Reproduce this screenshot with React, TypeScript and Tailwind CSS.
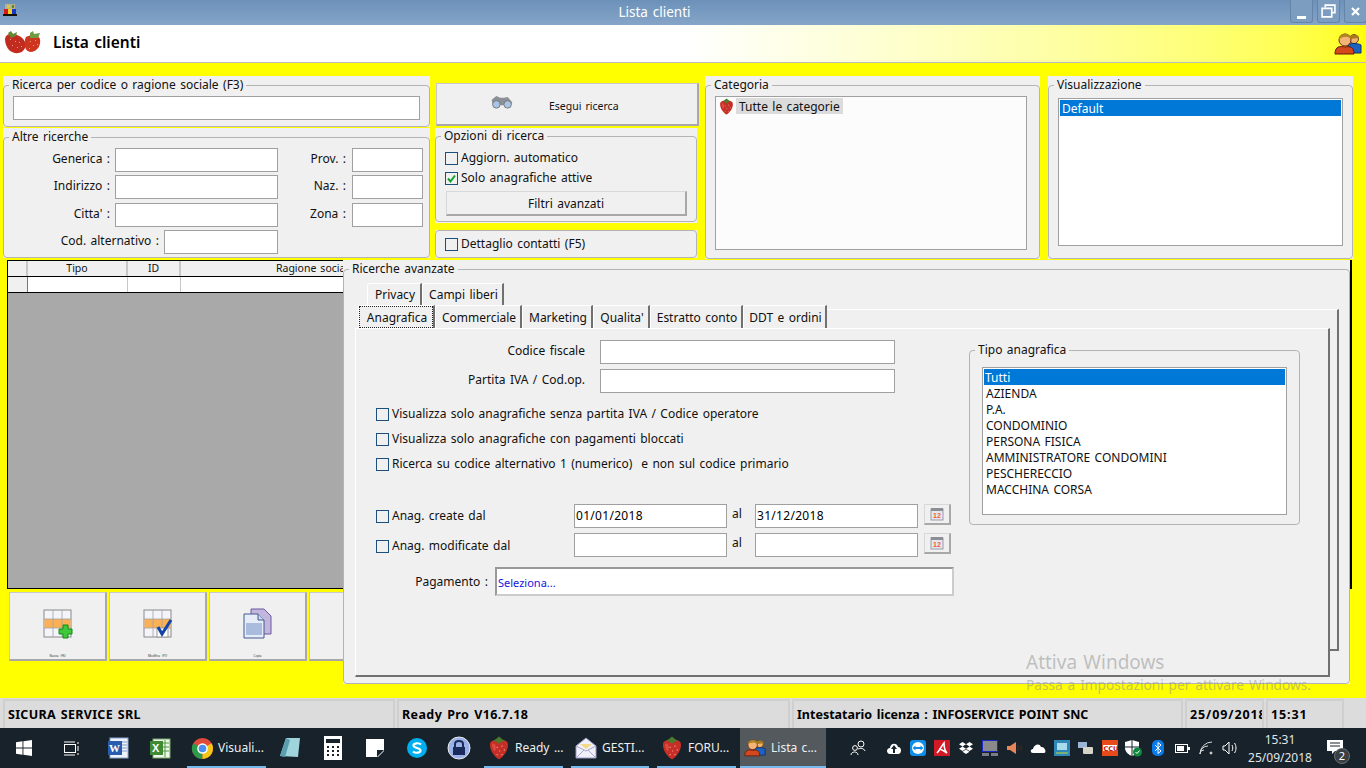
import React from "react";

const font = "font-['Noto_Sans','Liberation_Sans',sans-serif]";

function Strawberry({ s = 18 }: { s?: number }) {
  return (
    <svg width={s} height={s} viewBox="0 0 20 20" className="shrink-0">
      <path d="M2.5 7 C2.5 3.5 7 3 10 3.5 C13 3 17.5 3.5 17.5 7 C18 12 13 18 10 19.5 C7 18 2 12 2.5 7Z" fill="#c62f27" />
      <path d="M4.5 6.5C7 5 8 9 6.5 13C5 11 4 9 4.5 6.5Z" fill="#dd4c3f" />
      <path d="M5 4 L7.5 2.5 L10 0.5 L12.5 2.5 L15 4 L12.5 4.5 L10 6.5 L7.5 4.5Z" fill="#4d7a2d" />
      <path d="M8 9h1v1H8zM12 8h1v1h-1zM14 11h1v1h-1zM10 12h1v1h-1zM8 15h1v1H8zM12 15h1v1h-1z" fill="#e89a80" />
    </svg>
  );
}

function Input({ className = "", value = "" }: { className?: string; value?: string }) {
  return (
    <div className={`h-[24px] bg-white border border-[#a0a0a0] pl-[1px] text-[12px] leading-[22px] tracking-[0.3px] text-black ${className}`}>{value}</div>
  );
}

function Check({ checked = false }: { checked?: boolean }) {
  return (
    <span className="w-[13px] h-[13px] border border-[#1c4f7c] bg-[#f0f0f0] shrink-0 flex items-center justify-center">
      {checked && (
        <svg width="11" height="11" viewBox="0 0 11 11"><path d="M2 5.5 L4.5 8.5 L9 2.5" stroke="#12a02c" strokeWidth="2" fill="none" /></svg>
      )}
    </span>
  );
}

function Group({ title, className = "", children }: { title?: string; className?: string; children: React.ReactNode }) {
  return (
    <fieldset className={`border border-[#b4b4b4] rounded-[4px] min-w-0 ${className}`}>
      {title && <legend className="ml-[5px] px-[3px] text-[12px] leading-[16px] text-[#111]">{title}</legend>}
      {children}
    </fieldset>
  );
}

function Label({ w, children }: { w: string; children: React.ReactNode }) {
  return <span className={`${w} text-right text-[12px] text-[#111] shrink-0 pb-[2px]`}>{children}</span>;
}

function Tab({ w, low, label, active }: { w: string; low?: boolean; label: string; active?: boolean }) {
  return (
    <div className={`${w} ${low ? "h-[23px]" : "h-[22px]"} shrink-0 text-[12px] text-[#111] border-t border-l border-white border-r-2 border-r-[#707070] rounded-tl-[3px] bg-[#f0f0f0]`}>
      <span className={`w-full h-full flex items-center justify-center pl-[2px] ${low ? "pt-[2px]" : ""} ${active ? "outline-1 outline-dotted outline-[#222] -outline-offset-1" : ""}`}>{label}</span>
    </div>
  );
}

function TableIcon({ kind }: { kind: "plus" | "check" }) {
  return (
    <svg width="30" height="30" viewBox="0 0 30 30">
      <rect x="1" y="1" width="27" height="27" fill="#f4f4fb" stroke="#8a8a8a" />
      <rect x="1.5" y="10" width="26" height="9" fill="#fbb055" />
      <path d="M10 1V28M19 1V28M1 10H28M1 19H28" stroke="#a3a3a3" strokeWidth="0.8" />
      {kind === "plus" ? (
        <path d="M20 16h5v4h4v5h-4v4h-5v-4h-4v-5h4z" fill="#3ec83a" stroke="#0e8c12" />
      ) : (
        <>
          <rect x="14" y="19" width="11" height="9" fill="#fff" stroke="#999" />
          <path d="M15 18 L19 25 L28 11" stroke="#1144a6" strokeWidth="3" fill="none" />
        </>
      )}
    </svg>
  );
}

function DocsIcon() {
  return (
    <svg width="30" height="32" viewBox="0 0 30 32">
      <path d="M8 1H21L28 8V26H8Z" fill="#c3b6de" stroke="#6b5aa0" />
      <path d="M1 6H15L21 12V30H1Z" fill="#e6ecf8" stroke="#42598e" />
      <rect x="3" y="15" width="16" height="12" fill="#a9bcdd" />
      <path d="M15 6V12H21" fill="#c9daf0" stroke="#42598e" />
    </svg>
  );
}

function ToolButton({ children, caption }: { children?: React.ReactNode; caption?: string }) {
  return (
    <div className="w-[98px] h-[69px] shrink-0 bg-[#f0f0f0] border border-[#c8c8c8] border-r-2 border-b-2 border-r-[#a8a8a8] border-b-[#a8a8a8] flex flex-col items-center">
      <div className="h-[60px] flex items-center justify-center pt-[2px]">{children}</div>
      {caption && <div className="text-[3px] leading-[4px] mt-[1px] text-[#333]">{caption}</div>}
    </div>
  );
}

function Calendar() {
  return (
    <div className="w-[27px] h-[21px] ml-[6px] mb-[3px] bg-[#f0f0f0] border border-[#d8d8d8] border-r-2 border-b-2 border-r-[#a8a8a8] border-b-[#a8a8a8] flex items-center justify-center">
      <svg width="14" height="14" viewBox="0 0 14 14">
        <rect x="1" y="2" width="12" height="11" fill="#e6e6f0" stroke="#9a9aa8" />
        <rect x="1" y="1" width="12" height="3" fill="#8d8d94" />
        <text x="3" y="11" fontSize="7" fontWeight="700" fill="#f0602a" fontFamily="Liberation Sans">12</text>
      </svg>
    </div>
  );
}

function People({ s = 28 }: { s?: number }) {
  return (
    <svg width={s} height={s} viewBox="0 0 28 24">
      <circle cx="20" cy="7" r="4.5" fill="#f2b271" stroke="#6a4a10" />
      <path d="M14 13 C15 11 24 11 27 13 L27 21 L14 21Z" fill="#1e62c0" stroke="#0d2f70" />
      <path d="M15 7 C15 2 25 1 25 6" fill="#a8781e" />
      <circle cx="11" cy="8" r="6" fill="#f4b478" stroke="#6a2a10" />
      <path d="M5 8 C4 0 18 0 17 7 C14 4 8 4 5 8Z" fill="#b08420" />
      <path d="M1 22 C1 14 6 14 11 15 C16 14 20 15 20 22Z" fill="#d5471c" stroke="#661a08" />
    </svg>
  );
}

function TaskApp({ w, icon, label, active }: { w: string; icon: React.ReactNode; label: string; active?: boolean }) {
  return (
    <div className={`${w} h-full shrink-0 relative flex items-center pl-[3px] gap-[4px] text-[12px] text-white ${active ? "bg-[#53595d]" : ""}`}>
      <span className="w-[24px] flex justify-center shrink-0">{icon}</span>
      <span className="whitespace-nowrap text-[#eef0f2]">{label}</span>
      <span className="absolute left-0 right-0 bottom-0 h-[2px] bg-[#76b9ed]" />
    </div>
  );
}

function Word() {
  return (
    <svg width="24" height="24" viewBox="0 0 24 24">
      <rect x="4" y="2" width="18" height="20" fill="#eef2fa" stroke="#8ba4cf" />
      <path d="M14 6H21M14 9H21M14 12H21M14 15H21" stroke="#7e9ccc" />
      <rect x="2" y="5" width="14" height="14" fill="#2a5cae" />
      <text x="3" y="16" fontSize="11" fontWeight="700" fill="#fff" fontFamily="Liberation Serif">W</text>
    </svg>
  );
}
function Excel() {
  return (
    <svg width="24" height="24" viewBox="0 0 24 24">
      <rect x="5" y="3" width="17" height="19" fill="#eef6ea" stroke="#79a868" />
      <path d="M13 7H21M13 11H21M13 15H21M17 4V21" stroke="#4c9a3c" />
      <rect x="2" y="5" width="13" height="14" fill="#3f8a34" />
      <text x="4" y="16" fontSize="11" fontWeight="700" fill="#fff" fontFamily="Liberation Sans">X</text>
    </svg>
  );
}
function Chrome() {
  return (
    <svg width="23" height="23" viewBox="0 0 24 24">
      <circle cx="12" cy="12" r="11" fill="#e04a3a" />
      <path d="M12 12L2.4 6.5A11 11 0 0 0 12 23Z" fill="#2b9a4a" />
      <path d="M12 12L12 23A11 11 0 0 0 21.5 6.5Z" fill="#f5c518" />
      <circle cx="12" cy="12" r="5.5" fill="#fff" />
      <circle cx="12" cy="12" r="4" fill="#4a8ef0" />
    </svg>
  );
}
function Mail() {
  return (
    <svg width="24" height="24" viewBox="0 0 24 24">
      <path d="M2 10L12 2L22 10V22H2Z" fill="#f0f0f8" stroke="#9a9ac8" />
      <path d="M2 10L12 15L22 10M2 22L10 14M22 22L14 14" stroke="#a8a8cc" fill="none" />
      <path d="M6 8H18L12 13Z" fill="#f5d98a" />
    </svg>
  );
}

function TrayIcon({ children }: { children: React.ReactNode }) {
  return <span className="w-[24px] h-full flex items-center justify-center shrink-0">{children}</span>;
}

export default function App() {
  return (
    <div className={`w-[1366px] h-[768px] overflow-hidden flex flex-col relative [word-spacing:1.3px] ${font}`}>
      {/* title bar */}
      <div className="h-[25px] shrink-0 flex items-start bg-gradient-to-b from-[#6c91b9] to-[#85a5c8] relative">
        <svg width="14" height="12" viewBox="0 0 14 12" className="ml-[3px] mt-[4px] shrink-0">
          <rect x="2" y="0" width="10" height="5" fill="#b8b090" />
          <rect x="4" y="1" width="3" height="3" fill="#d8c83a" />
          <rect x="9" y="1" width="2" height="3" fill="#4c8a3a" />
          <rect x="1" y="5" width="4" height="5" fill="#d81818" />
          <rect x="5" y="5" width="4" height="5" fill="#f0d020" />
          <rect x="9" y="5" width="4" height="5" fill="#1838c8" />
          <rect x="0" y="10" width="14" height="2" fill="#181008" />
        </svg>
        <div className="flex-1 pl-[2px] text-center text-[13.5px] leading-[24px] text-white">Lista clienti</div>
        <div className="flex gap-[4px] -mr-[1px] items-start">
          <div className="w-[23px] h-[23px] rounded-b-[3px] bg-[#7c9dc0] border border-t-0 border-[#6585a8] flex items-end justify-center pb-[3px]"><span className="w-[9px] h-[3px] bg-white" /></div>
          <div className="w-[23px] h-[23px] rounded-b-[3px] bg-[#7c9dc0] border border-t-0 border-[#6585a8] flex items-center justify-center">
            <svg width="15" height="14" viewBox="0 0 14 13"><path d="M4 3V1H13V8H10M1 4H10V12H1Z" fill="none" stroke="#fff" strokeWidth="1.5" /></svg>
          </div>
          <div className="w-[23px] h-[23px] rounded-b-[3px] bg-[#7c9dc0] border border-t-0 border-[#6585a8] flex items-center justify-center">
            <svg width="9" height="9" viewBox="0 0 9 9"><path d="M1 1L8 8M8 1L1 8" stroke="#fff" strokeWidth="2.2" /></svg>
          </div>
        </div>
      </div>

      {/* header */}
      <div className="h-[38px] shrink-0 flex items-center bg-gradient-to-r from-white via-white via-50% to-[#ffff00] border-b border-[#bcbcbc]">
        <svg width="38" height="26" viewBox="0 0 38 26" className="ml-[4px] mt-[-2px]">
          <path d="M1 9C2 3 8 3 13 5C19 7 23 12 21 18C18 25 9 24 5 20C2 16 1 13 1 9Z" fill="#c22c20" />
          <path d="M22 7C27 4 35 5 36 9C37 15 34 21 27 22C23 22 20 18 21 13C21 10 21 8 22 7Z" fill="#cd351f" />
          <path d="M4 3L7 1L9 4L13 2L12 6L7 8Z" fill="#5f8a33" />
          <path d="M26 3L29 1L30 4L36 3L34 8L26 8Z" fill="#6f9a3f" />
          <path d="M6 9h1v1H6zM11 11h1v1h-1zM15 12h1v1h-1zM8 15h1v1H8zM13 17h1v1h-1zM17 16h1v1h-1zM26 11h1v1h-1zM31 10h1v1h-1zM29 15h1v1h-1zM33 14h1v1h-1zM25 18h1v1h-1z" fill="#f09a80" />
        </svg>
        <span className="ml-[11px] text-[15.5px] leading-[20px] font-semibold text-black pb-[4px]">Lista clienti</span>
        <span className="ml-auto mr-[4px] flex"><People s={28} /></span>
      </div>

      {/* workspace */}
      <div className="flex-1 bg-[#ffff00] relative flex flex-col pt-[13px] min-h-0">
        <div className="flex items-start h-[184px] shrink-0">
          {/* left */}
          <div className="w-[427px] ml-[3px] shrink-0 flex flex-col gap-[1px]">
            <div className="bg-[#f0f0f0] h-[51px] pt-[1px]">
              <Group title="Ricerca per codice o ragione sociale (F3)" className="h-[50px]">
                <div className="px-[9px] pt-[3px]"><Input className="w-[407px]" /></div>
              </Group>
            </div>
            <div className="bg-[#f0f0f0] h-[130px] pt-[1px]">
              <Group title="Altre ricerche" className="h-[129px]">
                <div className="flex flex-col pt-[3px]">
                  <div className="flex items-center">
                    <Label w="w-[106px]">Generica :</Label>
                    <Input className="w-[163px] ml-[5px]" />
                    <Label w="w-[68px]">Prov. :</Label>
                    <Input className="w-[71px] ml-[6px]" />
                  </div>
                  <div className="flex items-center mt-[3px]">
                    <Label w="w-[106px]">Indirizzo :</Label>
                    <Input className="w-[163px] ml-[5px]" />
                    <Label w="w-[68px]">Naz. :</Label>
                    <Input className="w-[71px] ml-[6px]" />
                  </div>
                  <div className="flex items-center mt-[4px]">
                    <Label w="w-[106px]">Citta' :</Label>
                    <Input className="w-[163px] ml-[5px]" />
                    <Label w="w-[68px]">Zona :</Label>
                    <Input className="w-[71px] ml-[6px]" />
                  </div>
                  <div className="flex items-center mt-[3px]">
                    <Label w="w-[155px]">Cod. alternativo :</Label>
                    <Input className="w-[114px] ml-[5px]" />
                  </div>
                </div>
              </Group>
            </div>
          </div>

          {/* middle */}
          <div className="w-[264px] ml-[5px] mt-[7px] shrink-0 flex flex-col">
            <div className="ml-[1px] w-[263px] h-[43px] bg-[#f0f0f0] border border-[#c8c8c8] border-r-2 border-b-2 border-r-[#a8a8a8] border-b-[#a8a8a8] flex items-center">
              <svg width="24" height="15" viewBox="0 0 24 16" className="ml-[53px] mb-[3px]">
                <path d="M1 5L6 1L10 3L14 3L18 2L23 8L19 14L14 11L10 11L7 14L2 10Z" fill="#8b8f96" />
                <circle cx="6" cy="10" r="4" fill="#a8c4e8" stroke="#777" />
                <circle cx="18" cy="10" r="4" fill="#a8c4e8" stroke="#777" />
              </svg>
              <span className="ml-[35px] mt-[5px] text-[10.5px] text-[#111]">Esegui ricerca</span>
            </div>
            <div className="mt-[2px] w-[262px] h-[95px] bg-[#f0f0f0]">
              <Group title="Opzioni di ricerca" className="h-[94px]">
                <div className="px-[9px] pt-[4px]">
                  <div className="flex items-center gap-[3px] h-[20px]"><Check /><span className="text-[12px] text-[#111]">Aggiorn. automatico</span></div>
                  <div className="flex items-center gap-[3px] h-[20px]"><Check checked /><span className="text-[12px] text-[#111]">Solo anagrafiche attive</span></div>
                  <div className="mt-[3px] ml-[1px] w-[241px] h-[25px] border border-[#d8d8d8] border-r-2 border-b-2 border-r-[#a8a8a8] border-b-[#a8a8a8] text-center text-[12px] leading-[24px] text-[#111]">Filtri avanzati</div>
                </div>
              </Group>
            </div>
            <div className="mt-[7px] w-[262px] h-[28px] bg-[#f0f0f0]">
              <Group className="h-[28px]">
                <div className="px-[9px] flex items-center gap-[3px] h-[26px]"><Check /><span className="text-[12px] text-[#111]">Dettaglio contatti (F5)</span></div>
              </Group>
            </div>
          </div>

          {/* categoria */}
          <div className="w-[335px] ml-[6px] h-[183px] shrink-0 bg-[#f0f0f0] pt-[1px]">
            <Group title="Categoria" className="h-[182px]">
              <div className="px-[9px] pt-[3px]">
                <div className="w-[312px] h-[154px] bg-[#fcfcfc] border border-[#a0a0a0] flex items-start pl-[2px] pt-[1px]">
                  <Strawberry s={17} />
                  <span className="ml-[1px] bg-[#dcdcdc] px-[3px] h-[16px] text-[12px] leading-[18px] text-[#111]">Tutte le categorie</span>
                </div>
              </div>
            </Group>
          </div>

          {/* visualizzazione */}
          <div className="w-[305px] ml-[8px] h-[183px] shrink-0 bg-[#f0f0f0] pt-[1px]">
            <Group title="Visualizzazione" className="h-[182px]">
              <div className="px-[9px] pt-[5px]">
                <div className="w-[285px] h-[148px] bg-white border border-[#a0a0a0] p-[1px]">
                  <div className="h-[16px] bg-[#0078d7] text-white text-[12px] leading-[18px] pl-[2px]">Default</div>
                </div>
              </div>
            </Group>
          </div>
        </div>

        {/* grid */}
        <div className="ml-[7px] w-[1345px] h-[329px] shrink-0 border border-black border-r-2 bg-[#a9a9a9] flex flex-col">
          <div className="h-[16px] bg-[#f0f0f0] border-b border-black flex text-[10.5px] text-[#111] leading-[15px]">
            <div className="w-[20px] border-r-2 border-[#c8c8c8]" />
            <div className="w-[100px] border-r-2 border-[#c8c8c8] text-center">Tipo</div>
            <div className="w-[53px] border-r-2 border-[#c8c8c8] text-center">ID</div>
            <div className="w-[268px] text-center whitespace-nowrap">Ragione sociale</div>
          </div>
          <div className="h-[16px] bg-white border-b border-black flex">
            <div className="w-[20px] bg-[#f0f0f0] border-r border-[#777]" />
            <div className="w-[100px] border-r border-[#c8c8c8]" />
            <div className="w-[53px] border-r border-[#c8c8c8]" />
          </div>
        </div>

        {/* tool buttons */}
        <div className="ml-[9px] mt-[3px] flex gap-[2px] shrink-0">
          <ToolButton caption="Nuova (F6)"><TableIcon kind="plus" /></ToolButton>
          <ToolButton caption="Modifica (F7)"><TableIcon kind="check" /></ToolButton>
          <ToolButton caption="Copia"><DocsIcon /></ToolButton>
          <ToolButton />
        </div>

        {/* overlay panel */}
        <div className="absolute left-[343px] top-[197px] w-[1007px] h-[424px] bg-[#f0f0f0] pt-[1px]">
          <Group title="Ricerche avanzate" className="h-[423px] relative">
            <div className="pl-[23px] flex pt-[6px]">
              <Tab w="w-[55px]" label="Privacy" />
              <Tab w="w-[82px]" label="Campi liberi" />
            </div>
            {/* back pane */}
            <div className="ml-[13px] mt-[4px] w-[982px] h-[342px] border-t border-white border-r-2 border-b-2 border-r-[#707070] border-b-[#707070] flex flex-col">
              <div className="flex -mt-[5px] ml-[1px]">
                <Tab w="w-[77px]" low label="Anagrafica" active />
                <Tab w="w-[87px]" low label="Commerciale" />
                <Tab w="w-[71px]" low label="Marketing" />
                <Tab w="w-[57px]" low label="Qualita'" />
                <Tab w="w-[93px]" low label="Estratto conto" />
                <Tab w="w-[84px]" low label="DDT e ordini" />
              </div>
              <div className="ml-[-2px] w-[975px] h-[349px] bg-[#f0f0f0] border-t border-l border-white border-r-2 border-b-2 border-r-[#707070] border-b-[#707070] flex shrink-0 relative">
                <div className="w-[613px] shrink-0 pt-[11px]">
                  <div className="flex items-center h-[24px]">
                    <Label w="w-[229px]">Codice fiscale</Label>
                    <Input className="w-[295px] ml-[15px]" />
                  </div>
                  <div className="flex items-center h-[24px] mt-[5px]">
                    <Label w="w-[229px]">Partita IVA / Cod.op.</Label>
                    <Input className="w-[295px] ml-[15px]" />
                  </div>
                  <div className="pl-[20px] mt-[13px] flex flex-col gap-[9px]">
                    <div className="flex items-center gap-[3px] h-[16px]"><Check /><span className="text-[12px] text-[#111]">Visualizza solo anagrafiche senza partita IVA / Codice operatore</span></div>
                    <div className="flex items-center gap-[3px] h-[16px]"><Check /><span className="text-[12px] text-[#111]">Visualizza solo anagrafiche con pagamenti bloccati</span></div>
                    <div className="flex items-center gap-[3px] h-[16px]"><Check /><span className="text-[12px] text-[#111] whitespace-pre">Ricerca su codice alternativo 1 (numerico)  e non sul codice primario</span></div>
                  </div>
                  <div className="flex items-end h-[24px] mt-[32px]">
                    <div className="w-[218px] pl-[20px] h-[24px] flex items-center gap-[3px] shrink-0"><Check /><span className="text-[12px] text-[#111]">Anag. create dal</span></div>
                    <Input className="w-[153px]" value="01/01/2018" />
                    <span className="w-[28px] pl-[5px] h-[24px] leading-[20px] text-[12px] text-[#111] shrink-0">al</span>
                    <Input className="w-[163px]" value="31/12/2018" />
                    <Calendar />
                  </div>
                  <div className="flex items-end h-[24px] mt-[5px]">
                    <div className="w-[218px] pl-[20px] pt-[2px] h-[24px] flex items-center gap-[3px] shrink-0"><Check /><span className="text-[12px] text-[#111]">Anag. modificate dal</span></div>
                    <Input className="w-[153px]" />
                    <span className="w-[28px] pl-[5px] h-[24px] leading-[20px] text-[12px] text-[#111] shrink-0">al</span>
                    <Input className="w-[163px]" />
                    <Calendar />
                  </div>
                  <div className="flex items-center h-[29px] mt-[10px]">
                    <span className="w-[132px] text-right text-[12px] text-[#111] shrink-0">Pagamento :</span>
                    <div className="ml-[7px] w-[459px] h-[29px] bg-white border-2 border-[#999] border-r-[#ccc] border-b-[#ccc] text-[11px] leading-[27px] text-[#1414e0] pl-[1px]">Seleziona...</div>
                  </div>
                </div>
                <div className="pt-[13px]">
                  <Group title="Tipo anagrafica" className="w-[331px] h-[183px]">
                    <div className="pl-[12px] pt-[9px]">
                      <div className="w-[305px] h-[148px] bg-white border border-[#a0a0a0] p-[1px] text-[12px] leading-[16px] text-[#111]">
                        <div className="bg-[#0078d7] text-white pl-[1px] h-[16px] leading-[18px]">Tutti</div>
                        {["AZIENDA", "P.A.", "CONDOMINIO", "PERSONA FISICA", "AMMINISTRATORE CONDOMINI", "PESCHERECCIO", "MACCHINA CORSA"].map((t) => (
                          <div key={t} className="pl-[2px] h-[16px] leading-[18px]">{t}</div>
                        ))}
                      </div>
                    </div>
                  </Group>
                </div>
              </div>
            </div>
          </Group>
        </div>

        {/* watermark */}
        <div className="absolute left-[1026px] top-[586px] text-[#8c8c8c]/50 pointer-events-none">
          <div className="text-[19px] leading-[26px]">Attiva Windows</div>
          <div className="text-[13.7px] leading-[18px] mt-[1px] whitespace-nowrap">Passa a Impostazioni per attivare Windows.</div>
        </div>

        <div className="flex-1" />
      </div>

      {/* status bar */}
      <div className="h-[30px] shrink-0 bg-[#dcdcdc] flex pl-[3px] pt-[1px] gap-[2px] text-[12.5px] font-bold text-black">
        <div className="w-[392px] border-2 border-b-0 border-[#cfcfcf] pl-[3px] tracking-[0.3px] leading-[27px] overflow-hidden whitespace-nowrap">SICURA SERVICE SRL</div>
        <div className="w-[393px] border-2 border-b-0 border-[#cfcfcf] pl-[3px] tracking-[0.4px] leading-[27px] overflow-hidden whitespace-nowrap">Ready Pro V16.7.18</div>
        <div className="w-[391px] border-2 border-b-0 border-[#cfcfcf] pl-[3px] leading-[27px] overflow-hidden whitespace-nowrap">Intestatario licenza : INFOSERVICE POINT SNC</div>
        <div className="w-[79px] border-2 border-b-0 border-[#cfcfcf] pl-[3px] tracking-[0.9px] leading-[27px] overflow-hidden whitespace-nowrap">25/09/2018</div>
        <div className="w-[78px] border-2 border-b-0 border-[#cfcfcf] pl-[3px] tracking-[0.9px] leading-[27px] overflow-hidden whitespace-nowrap">15:31</div>
      </div>

      {/* taskbar */}
      <div className="h-[40px] shrink-0 bg-[#17222a] flex items-center text-white">
        <div className="w-[48px] h-full flex items-center justify-center shrink-0">
          <svg width="16" height="16" viewBox="0 0 16 16"><path d="M0 2.2L6.5 1.3V7.5H0ZM7.4 1.2L16 0V7.5H7.4ZM0 8.4H6.5V14.7L0 13.8ZM7.4 8.4H16V16L7.4 14.8Z" fill="#fff" /></svg>
        </div>
        <div className="w-[46px] ml-[1px] h-full flex items-center justify-center shrink-0">
          <svg width="16" height="15" viewBox="0 0 16 15" fill="none" stroke="#fff"><rect x="0.5" y="3.5" width="11" height="8" /><path d="M0 1H11M0 14H11M14 1V3M14 5V10M14 12V14" /></svg>
        </div>
        <div className="w-[42px] ml-[2px] flex justify-center shrink-0"><Word /></div>
        <div className="w-[42px] flex justify-center shrink-0"><Excel /></div>
        <div className="w-[6px]" />
        <TaskApp w="w-[79px]" icon={<Chrome />} label="Visuali..." />
        <div className="w-[3px]" />
        <div className="w-[42px] flex justify-center shrink-0 mr-[1px]">
          <svg width="24" height="24" viewBox="0 0 24 24"><path d="M8 2H22L20 21L2 20Z" fill="#9fd4dc" /><path d="M8 2L2 20L7 21L12 4Z" fill="#5a9fb0" /></svg>
        </div>
        <div className="w-[42px] flex justify-center shrink-0">
          <svg width="18" height="24" viewBox="0 0 18 24"><rect width="18" height="24" fill="#fff" /><rect x="2" y="3" width="14" height="4" fill="#17222a" /><path d="M3 10h2v2H3zM8 10h2v2H8zM13 10h2v2h-2zM3 14h2v2H3zM8 14h2v2H8zM13 14h2v2h-2zM3 18h2v2H3zM8 18h2v2H8zM13 18h2v2h-2z" fill="#17222a" /></svg>
        </div>
        <div className="w-[42px] flex justify-center shrink-0">
          <svg width="18" height="18" viewBox="0 0 18 18"><path d="M0 0H18V12L12 18H0Z" fill="#fff" /><path d="M18 11L11 11L11 18Z" fill="#17222a" /></svg>
        </div>
        <div className="w-[42px] flex justify-center shrink-0">
          <svg width="22" height="22" viewBox="0 0 22 22"><circle cx="11" cy="11" r="10" fill="#00aff0" /><path d="M15 7.5C13 5.5 7.5 6 7.5 8.5C7.5 11.5 14.5 10.5 14.5 13.5C14.5 16 9 16.5 7 14.5" stroke="#fff" strokeWidth="2.2" fill="none" /></svg>
        </div>
        <div className="w-[42px] flex justify-center shrink-0">
          <svg width="24" height="24" viewBox="0 0 24 24"><circle cx="12" cy="12" r="11" fill="#9bb2e8" stroke="#e8e8e8" /><rect x="6" y="11" width="12" height="8" fill="#1a2a5a" /><path d="M8 11V8C8 4 16 4 16 8V11" stroke="#1a2a5a" strokeWidth="2" fill="none" /></svg>
        </div>
        <div className="w-[4px]" />
        <TaskApp w="w-[79px]" icon={<Strawberry s={24} />} label="Ready ..." />
        <div className="w-[8px]" />
        <TaskApp w="w-[78px]" icon={<Mail />} label="GESTI..." />
        <div className="w-[8px]" />
        <TaskApp w="w-[79px]" icon={<Strawberry s={24} />} label="FORU..." />
        <div className="w-[4px]" />
        <TaskApp w="w-[86px]" icon={<People s={22} />} label="Lista c..." active />

        <div className="ml-[20px] flex h-full items-center">
          <TrayIcon><svg width="16" height="16" viewBox="0 0 16 16" fill="none" stroke="#fff"><circle cx="11" cy="4" r="3" /><circle cx="5" cy="8" r="2.4" /><path d="M1 15C1 11 8 11 8 15M8 9C10 8 14 8 15 11" /></svg></TrayIcon>
          <div className="w-[12px]" />
          <TrayIcon><svg width="16" height="12" viewBox="0 0 16 12"><path d="M4 12C0 12 0 6 4 6C4 1 11 0 12 5C16 5 16 12 12 12Z" fill="#fff" /><path d="M8 3L5 7H7V11H9V7H11Z" fill="#17222a" /></svg></TrayIcon>
          <TrayIcon><svg width="16" height="16" viewBox="0 0 16 16"><rect width="16" height="16" rx="3" fill="#0e8ee9" /><circle cx="8" cy="8" r="6" fill="#fff" /><path d="M2.5 8L5.5 5.5V7H10.5V5.5L13.5 8L10.5 10.5V9H5.5V10.5Z" fill="#0e8ee9" /></svg></TrayIcon>
          <TrayIcon><svg width="16" height="16" viewBox="0 0 16 16"><rect width="16" height="16" fill="#d11a26" /><path d="M3 13C6 10 8 5 10 3C10 7 11 11 13 13C10 11 7 9 5 9" stroke="#fff" strokeWidth="1.6" fill="none" /></svg></TrayIcon>
          <TrayIcon><svg width="14" height="12" viewBox="0 0 14 12" fill="#fff"><path d="M3.5 0L7 2.2L3.5 4.5L0 2.2ZM10.5 0L14 2.2L10.5 4.5L7 2.2ZM3.5 4.5L7 6.8L3.5 9L0 6.8ZM10.5 4.5L14 6.8L10.5 9L7 6.8ZM3.5 9.8L7 7.6L10.5 9.8L7 12Z" /></svg></TrayIcon>
          <TrayIcon><svg width="16" height="16" viewBox="0 0 16 16"><rect x="0.5" y="0.5" width="15" height="11" fill="#8a8a8a" stroke="#1a2ac8" /><rect y="13" width="7" height="3" fill="#7a7a8a" /><rect x="9" y="13" width="7" height="3" fill="#7a7a8a" /></svg></TrayIcon>
          <TrayIcon><svg width="16" height="16" viewBox="0 0 16 16"><path d="M1 6H4L10 2V14L4 10H1Z" fill="#e8865a" /><path d="M12 5V11M15 6V10" stroke="#4a2a1a" /></svg></TrayIcon>
          <TrayIcon><svg width="17" height="10" viewBox="0 0 17 10"><path d="M3 10C0 10 0 6 3 6C4 1 10 0 11 4C15 3 17 10 14 10Z" fill="#fff" /></svg></TrayIcon>
          <TrayIcon><svg width="16" height="16" viewBox="0 0 16 16"><rect width="16" height="16" fill="#2f86b8" /><rect x="3" y="3" width="10" height="7" fill="#a8dcec" /><path d="M2 13H14" stroke="#c8d838" /></svg></TrayIcon>
          <TrayIcon><svg width="16" height="14" viewBox="0 0 16 14"><rect y="1" width="9" height="6" fill="#9ab4d4" /><rect x="5" y="6" width="10" height="7" rx="1" fill="#d4d4c8" /></svg></TrayIcon>
          <TrayIcon><svg width="16" height="16" viewBox="0 0 16 16"><rect width="16" height="16" fill="#e84a1a" /><rect x="1" y="5" width="14" height="6" fill="#fff" /><text x="1.5" y="10.5" fontSize="6.5" fontWeight="700" fill="#c01010" fontFamily="DejaVu Sans">CCU</text></svg></TrayIcon>
          <TrayIcon><svg width="18" height="17" viewBox="0 0 18 17"><path d="M7 0L14 2V8C14 12 10 15 7 16C4 15 0 12 0 8V2Z" fill="#fff" /><path d="M7 0V16M0 7H14" stroke="#17222a" /><circle cx="12.5" cy="12" r="4.5" fill="#0e8a3c" /><path d="M10.5 12L12 13.5L14.5 10.5" stroke="#fff" fill="none" /></svg></TrayIcon>
          <TrayIcon><svg width="12" height="16" viewBox="0 0 12 16"><rect width="12" height="16" rx="5" fill="#0a7ae8" /><path d="M3 5L9 11L6 13.5V2.5L9 5L3 11" stroke="#fff" fill="none" /></svg></TrayIcon>
          <TrayIcon><svg width="15" height="9" viewBox="0 0 15 9"><rect x="0.5" y="0.5" width="12" height="8" fill="none" stroke="#fff" /><rect x="2" y="2" width="7" height="5" fill="#fff" /><rect x="13" y="3" width="2" height="3" fill="#fff" /></svg></TrayIcon>
          <TrayIcon><svg width="14" height="14" viewBox="0 0 14 14" fill="none" stroke="#d8d8d8"><path d="M1 13A12 12 0 0 1 13 1M1 13A8 8 0 0 1 9 5M1 13A4 4 0 0 1 5 9" /><circle cx="12" cy="12" r="1" fill="#d8d8d8" /></svg></TrayIcon>
          <TrayIcon><svg width="16" height="14" viewBox="0 0 16 14" fill="none" stroke="#fff"><path d="M1 5H3L7 1V13L3 9H1Z" /><path d="M10 4C11 6 11 8 10 10M12.5 2C14.5 5 14.5 9 12.5 12" /></svg></TrayIcon>
        </div>
        <div className="w-[70px] ml-[3px] pt-[1px] text-center text-[12px] leading-[18px] text-[#e4e6e8] shrink-0">
          <div>15:31</div>
          <div className="whitespace-nowrap">25/09/2018</div>
        </div>
        <div className="ml-[8px] relative w-[24px] h-full shrink-0">
          <svg width="16" height="15" viewBox="0 0 16 15" className="absolute left-[4px] top-[12px]"><path d="M0 0H16V11H8L5 14V11H0Z" fill="#fff" /><path d="M3 3H13M3 6H13" stroke="#17222a" /></svg>
          <span className="absolute left-[11px] top-[20px] w-[16px] h-[16px] rounded-full bg-[#3a3f44] border border-[#6a6f74] text-[11px] leading-[14px] text-center text-white">2</span>
        </div>
      </div>
    </div>
  );
}
